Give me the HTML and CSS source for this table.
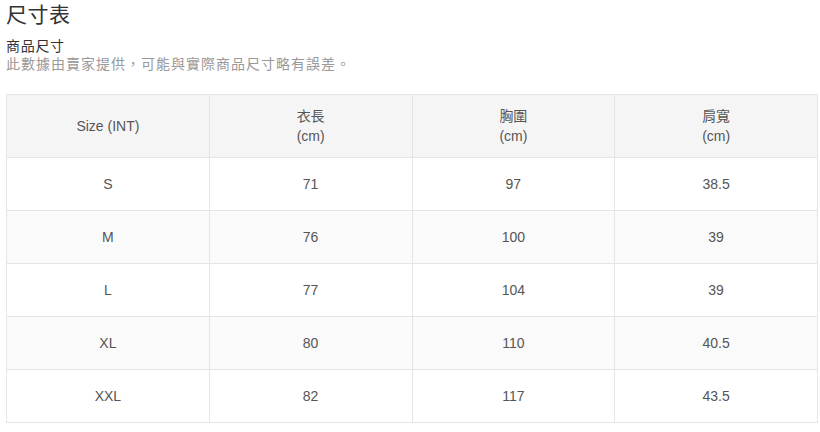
FILE: index.html
```html
<!DOCTYPE html>
<html lang="zh-Hant">
<head>
<meta charset="utf-8">
<link rel="stylesheet" href="styles.css">
</head>
<body>
<div class="page">
  <h1 class="title">尺寸表</h1>
  <div class="sub">商品尺寸</div>
  <div class="note">此數據由賣家提供，可能與實際商品尺寸略有誤差。</div>
  <table class="chart">
    <thead>
      <tr><th>Size (INT)</th><th>衣長<br>(cm)</th><th>胸圍<br>(cm)</th><th>肩寬<br>(cm)</th></tr>
    </thead>
    <tbody>
      <tr><td>S</td><td>71</td><td>97</td><td>38.5</td></tr>
      <tr><td>M</td><td>76</td><td>100</td><td>39</td></tr>
      <tr><td>L</td><td>77</td><td>104</td><td>39</td></tr>
      <tr><td>XL</td><td>80</td><td>110</td><td>40.5</td></tr>
      <tr><td>XXL</td><td>82</td><td>117</td><td>43.5</td></tr>
    </tbody>
  </table>
</div>
</body>
</html>
```
FILE: styles.css
```css
html, body { margin: 0; padding: 0; background: #fff; }
body { font-family: "Liberation Sans", Arial, "Noto Sans CJK TC", sans-serif; color: #333; }
.page { padding: 0 2px 0 6px; }
.title { margin: 0; font-size: 21px; font-weight: normal; line-height: 30px; color: #333; letter-spacing: 0.5px; }
.sub { margin-top: 7px; font-size: 14px; line-height: 18px; color: #333; letter-spacing: 0.7px; }
.note { font-size: 14px; line-height: 18px; color: #999; letter-spacing: 1px; }
.chart { margin-top: 21px; width: 812px; border-collapse: collapse; table-layout: fixed; font-size: 14px; }
.chart th, .chart td { border: 1px solid #e5e5e5; text-align: center; font-weight: normal; color: #555; }
.chart th { background: #f5f5f5; line-height: 20px; padding: 11px 4px; }
.chart td { line-height: 20px; padding: 16px 4px; }
.chart tbody tr:nth-child(even) td { background: #fafafa; }
```
